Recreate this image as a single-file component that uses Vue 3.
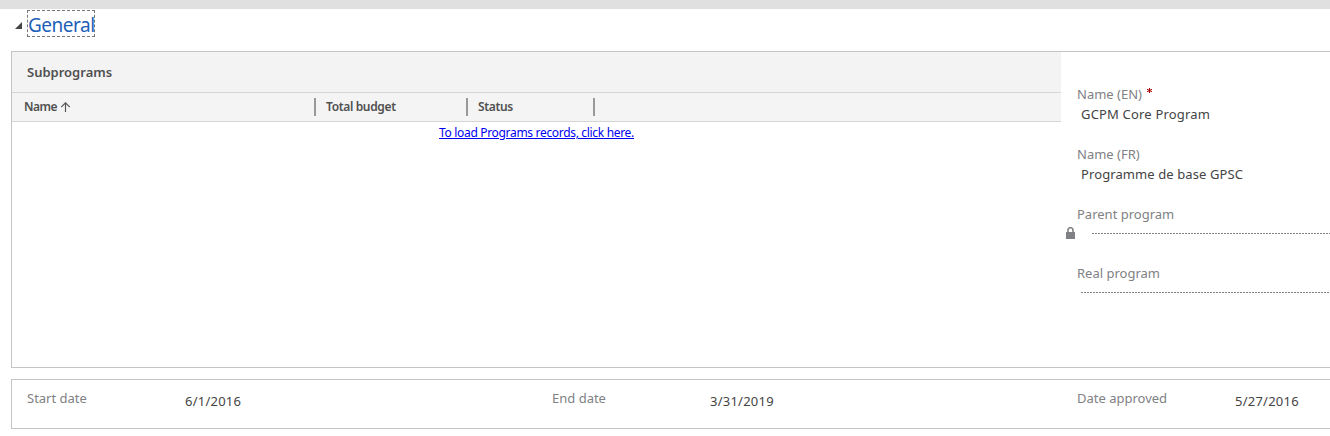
<script setup>
const columns = [
  { key: 'name', label: 'Name', sorted: true },
  { key: 'budget', label: 'Total budget' },
  { key: 'status', label: 'Status' },
]
const dates = [
  { key: 'start', label: 'Start date', value: '6/1/2016' },
  { key: 'end', label: 'End date', value: '3/31/2019' },
  { key: 'approved', label: 'Date approved', value: '5/27/2016' },
]
</script>

<template>
  <div class="page">
    <div class="topbar"></div>
    <header class="section-head">
      <svg class="caret" width="7" height="7" viewBox="0 0 7 7"><path d="M7 0V7H0Z" fill="#444" /></svg>
      <h2 class="title">General</h2>
    </header>

    <section class="panel main">
      <div class="grid">
        <div class="grid-title">Subprograms</div>
        <div class="grid-cols">
          <div v-for="c in columns" :key="c.key" class="col" :class="c.key">
            <span>{{ c.label }}</span>
            <svg v-if="c.sorted" class="sort" width="10" height="10" viewBox="0 0 10 10" fill="none" stroke="#555" stroke-width="1.15">
              <path d="M4.5 10V.8M.2 5.1L4.5.8L8.8 5.1" />
            </svg>
          </div>
        </div>
        <div class="grid-body"><a class="load">To load Programs records, click here.</a></div>
      </div>

      <div class="fields">
        <div class="field">
          <div class="label required">
            <span>Name (EN)</span>
            <svg class="req" width="5" height="5" viewBox="0 0 5 5" stroke="#a80000" stroke-width="1"><path d="M2.5 0V5M0 1.3L5 3.7M5 1.3L0 3.7" /></svg>
          </div>
          <div class="value name-en">GCPM Core Program</div>
        </div>
        <div class="field">
          <div class="label">Name (FR)</div>
          <div class="value name-fr">Programme de base GPSC</div>
        </div>
        <div class="field parent">
          <div class="label">Parent program</div>
          <div class="locked">
            <svg width="9" height="12" viewBox="0 0 9 12">
              <path d="M2 5.5V3A2.3 2.1 0 0 1 7 3V5.5" fill="none" stroke="#808184" stroke-width="1.6" />
              <path d="M0 5H9V12H0Z" fill="#808184" />
            </svg>
            <div class="dashes"></div>
          </div>
        </div>
        <div class="field">
          <div class="label">Real program</div>
          <div class="dashes real"></div>
        </div>
      </div>
    </section>

    <section class="panel dates">
      <div v-for="d in dates" :key="d.key" class="date">
        <div class="label">{{ d.label }}</div>
        <div class="date-value">{{ d.value }}</div>
      </div>
    </section>
  </div>
</template>

<style>
body { background: #fff; overflow: hidden; }
</style>

<style scoped>
.page {
  width: 1330px;
  height: 436px;
  overflow: hidden;
  background: #fff;
  font-family: "Segoe UI", "Noto Sans", "Open Sans", sans-serif;
  white-space: nowrap;
  color: #444;
}
.page * { box-sizing: border-box; }
.topbar { height: 9px; background: #e0e0e0; }
.section-head { display: flex; height: 42px; padding: 1px 0 0 15px; }
.caret { margin: 12px 5px 0 0; }
.title {
  width: 68px;
  height: 27px;
  margin: 0;
  border: 1px dashed #777;
  font-size: 19px;
  font-weight: 400;
  line-height: 28px;
  letter-spacing: -0.5px;
  color: #1d5fb8;
}
.panel { width: 1340px; margin-left: 11px; border: 1px solid #c2c4c6; }
.main { display: flex; height: 317px; }
.grid { width: 1049px; }
.grid-title {
  height: 41px;
  padding-left: 15px;
  background: #f3f3f3;
  border-bottom: 1px solid #d5d5d5;
  font-size: 13px;
  font-weight: 600;
  line-height: 40px;
  color: #505050;
}
.grid-cols {
  display: flex;
  height: 29px;
  background: #f4f4f4;
  border-bottom: 1px solid #d5d5d5;
  font-size: 12px;
  font-weight: 600;
  line-height: 18px;
  letter-spacing: -0.35px;
  color: #505050;
}
.col { display: flex; height: 18px; margin-top: 5px; border-right: 2px solid #999; }
.col.name { width: 304px; padding-left: 12px; letter-spacing: -0.5px; }
.col.budget { width: 152px; padding-left: 10px; }
.col.status { width: 127px; padding-left: 10px; }
.sort { margin: 4px 0 0 4px; }
.grid-body { text-align: center; font-size: 12px; line-height: 22px; letter-spacing: -0.32px; }
.load { color: #0000f0; text-decoration: underline; }
.fields { flex: 1; padding: 33px 0 0 16px; }
.field { height: 60px; }
.label { height: 19px; font-size: 13px; line-height: 19px; color: #808184; }
.required { display: flex; }
.req { margin: 3px 0 0 5px; }
.value { height: 21px; padding-left: 4px; font-size: 13px; line-height: 21px; }
.name-en { letter-spacing: 0.18px; }
.name-fr { letter-spacing: 0.1px; }
.field.parent { height: 59px; }
.locked { display: flex; margin-left: -11px; padding-top: 3px; }
.dashes {
  flex: 1;
  height: 1px;
  background: repeating-linear-gradient(90deg, #808080 0 2px, transparent 2px 3px);
}
.locked .dashes { margin: 6px 0 0 17px; }
.dashes.real { margin: 9px 0 0 4px; }
.dates { display: flex; height: 50px; margin-top: 11px; padding: 9px 0 0 15px; }
.date { display: flex; flex: none; width: 525px; }
.date .label { width: 158px; }
.date-value { padding-top: 2px; font-size: 13px; line-height: 20px; letter-spacing: 0.24px; }
</style>
